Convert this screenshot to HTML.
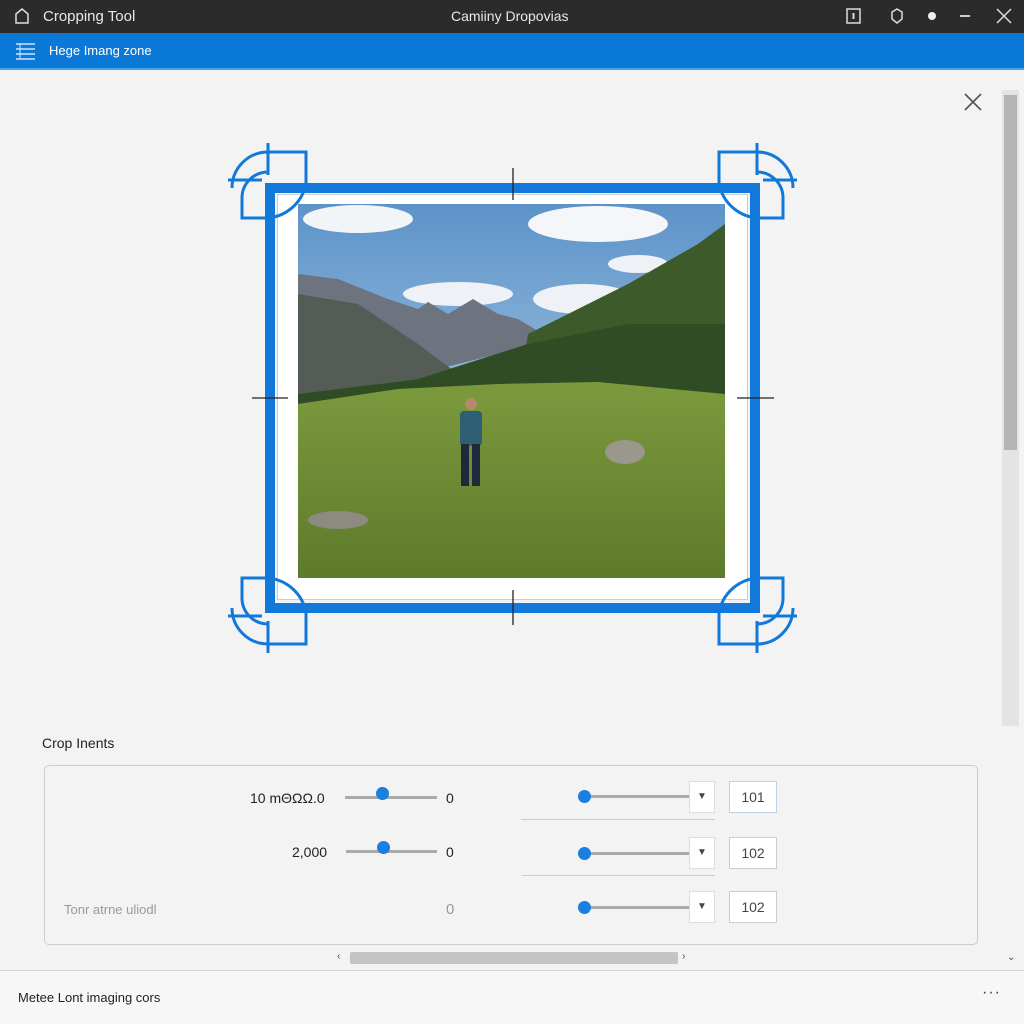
<!DOCTYPE html>
<html><head><meta charset="utf-8"><style>
*{margin:0;padding:0;box-sizing:border-box}
body{width:1024px;height:1024px;background:#f3f3f3;font-family:"Liberation Sans",sans-serif;position:relative;overflow:hidden;color:#222}
.abs{position:absolute}
.title{left:0;top:0;width:1024px;height:33px;background:#2b2b2b;color:#e8e8e8;font-size:15px}
.blue{left:0;top:33px;width:1024px;height:37px;background:#0b79d8;border-bottom:2px solid #4aa3ea;color:#fff;font-size:13px}
.thumb{width:13px;height:13px;border-radius:50%;background:#1a7fe0}
.track{height:3px;background:#aaa}
.dd{width:26px;height:32px;background:#fff;border:1px solid #ddd;font-size:10px;color:#444;text-align:center;line-height:30px}
.nb{width:48px;height:32px;background:#fff;border:1px solid #ccc;font-size:14px;color:#444;text-align:center;line-height:30px}
</style></head><body>
<div class="abs title">
 <svg class="abs" style="left:14px;top:7px" width="16" height="18"><path d="M2 7 L8 2 L14 7 V16 H2Z" fill="none" stroke="#ddd" stroke-width="1.5"/></svg>
 <div class="abs" style="left:43px;top:8px">Cropping Tool</div>
 <div class="abs" style="left:451px;top:8px;font-size:14px">Camiiny Dropovias</div>
 <svg class="abs" style="left:846px;top:8px" width="16" height="17"><rect x="1" y="1" width="13" height="14" fill="none" stroke="#ddd" stroke-width="1.5"/><line x1="7.5" y1="5" x2="7.5" y2="11" stroke="#ddd" stroke-width="2"/></svg>
 <svg class="abs" style="left:889px;top:7px" width="16" height="18"><path d="M8 2 L13 5 L13 12 L8 16 L3 12 L3 5Z" fill="none" stroke="#ddd" stroke-width="1.5"/></svg>
 <div class="abs" style="left:928px;top:12px;width:8px;height:8px;border-radius:50%;background:#eee"></div>
 <div class="abs" style="left:960px;top:15px;width:10px;height:2px;background:#ccc"></div>
 <svg class="abs" style="left:995px;top:7px" width="18" height="18"><path d="M2 2 L16 16 M16 2 L2 16" stroke="#ddd" stroke-width="1.5"/></svg>
</div>
<div class="abs blue">
 <svg class="abs" style="left:15px;top:9px" width="22" height="18"><path d="M1 2H20M1 7H20M1 12H20M1 17H20" stroke="#cfe6fb" stroke-width="1.5"/><path d="M5 2V17" stroke="#cfe6fb" stroke-width="1"/></svg>
 <div class="abs" style="left:49px;top:10px">Hege Imang zone</div>
</div>
<svg class="abs" style="left:963px;top:92px" width="20" height="20"><path d="M2 2L18 18M18 2L2 18" stroke="#555" stroke-width="1.6"/></svg>
<!-- scrollbar -->
<div class="abs" style="left:1002px;top:90px;width:17px;height:636px;background:#e4e4e4"></div>
<div class="abs" style="left:1004px;top:95px;width:13px;height:355px;background:#b4b4b4"></div>
<div class="abs" style="left:1007px;top:952px;font-size:10px;color:#444">⌄</div>
<!-- crop area -->
<div class="abs" style="left:265px;top:183px;width:495px;height:430px;border:10px solid #1279db"></div>
<div class="abs" style="left:277px;top:194px;width:471px;height:406px;background:#fff;border:1px solid #ccc"></div>
<svg class="abs" style="left:298px;top:204px" width="427" height="374" viewBox="0 0 427 374">
 <defs><linearGradient id="sky" x1="0" y1="0" x2="0" y2="1"><stop offset="0" stop-color="#5d93c9"/><stop offset="1" stop-color="#c4dbed"/></linearGradient>
 <linearGradient id="gr" x1="0" y1="0" x2="0" y2="1"><stop offset="0" stop-color="#7c9a3d"/><stop offset="1" stop-color="#5e7a2c"/></linearGradient></defs>
 <rect width="427" height="374" fill="url(#sky)"/>
 <ellipse cx="60" cy="15" rx="55" ry="14" fill="#f2f5f8"/><ellipse cx="300" cy="20" rx="70" ry="18" fill="#f4f6f9"/><ellipse cx="160" cy="90" rx="55" ry="12" fill="#eef2f6"/><ellipse cx="285" cy="95" rx="50" ry="15" fill="#eef2f6"/><ellipse cx="340" cy="60" rx="30" ry="9" fill="#eef2f6"/>
 <path d="M0 70 L40 75 L90 95 L120 105 L130 98 L150 110 L175 95 L200 110 L220 115 L245 130 L260 135 L0 200Z" fill="#6d7480"/>
 <path d="M0 90 L60 100 L120 140 L160 170 L0 190Z" fill="#555c55"/>
 <path d="M230 130 L330 80 L400 40 L427 20 L427 200 L220 190Z" fill="#3d5a2a"/>
 <path d="M0 190 L120 175 L230 140 L330 120 L427 120 L427 210 L0 210Z" fill="#2f4c24"/>
 <path d="M0 200 L100 185 L200 180 L300 178 L427 190 L427 374 L0 374Z" fill="url(#gr)"/>
 <ellipse cx="327" cy="248" rx="20" ry="12" fill="#9a978d"/><ellipse cx="40" cy="316" rx="30" ry="9" fill="#8d8a80"/>
 <rect x="162" y="207" width="22" height="35" rx="4" fill="#2e5f73"/><circle cx="173" cy="200" r="6" fill="#b58a6a"/><rect x="163" y="240" width="8" height="42" fill="#1e2a3c"/><rect x="174" y="240" width="8" height="42" fill="#1e2a3c"/>
</svg>
<svg class="abs" style="left:0;top:0" width="1024" height="1024" fill="none" stroke="#1279db">
 <g stroke="#222" stroke-width="1.3"><path d="M513 168V200M513 590V625M252 398H288M737 398H774"/></g>
 <g id="c" stroke-width="3">
  <path d="M268 152H306V183 M268 152V172 A26 26 0 0 0 242 198V218H265 M306 183 A42 42 0 0 1 265 218 M268 152 A36 36 0 0 0 232 188"/>
  <path d="M228 180H262M268 143V175"/>
 </g>
 <use href="#c" transform="translate(1025 0) scale(-1 1)"/>
 <use href="#c" transform="translate(0 796) scale(1 -1)"/>
 <use href="#c" transform="translate(1025 796) scale(-1 -1)"/>
</svg>
<!-- panel -->
<div class="abs" style="left:42px;top:735px;font-size:14px">Crop Inents</div>
<div class="abs" style="left:44px;top:765px;width:934px;height:180px;border:1px solid #ccc;border-radius:5px"></div>
<div class="abs" style="left:250px;top:790px;font-size:14px">10 mΘΩΩ.0</div>
<div class="abs track" style="left:345px;top:796px;width:92px"></div><div class="abs thumb" style="left:376px;top:787px"></div>
<div class="abs" style="left:446px;top:790px;font-size:14px">0</div>
<div class="abs" style="left:292px;top:844px;font-size:14px">2,000</div>
<div class="abs track" style="left:346px;top:850px;width:91px"></div><div class="abs thumb" style="left:377px;top:841px"></div>
<div class="abs" style="left:446px;top:844px;font-size:14px">0</div>
<div class="abs" style="left:64px;top:902px;font-size:13px;color:#999">Tonr atrne uliodl</div>
<div class="abs" style="left:446px;top:901px;font-size:15px;color:#999">0</div>
<div class="abs" style="left:521px;top:819px;width:194px;height:1px;background:#ccc"></div>
<div class="abs" style="left:522px;top:875px;width:193px;height:1px;background:#ccc"></div>
<div class="abs track" style="left:585px;top:795px;width:105px"></div><div class="abs thumb" style="left:578px;top:790px"></div>
<div class="abs dd" style="left:689px;top:781px">▼</div><div class="abs nb" style="left:729px;top:781px;border-color:#b8d3ea">101</div>
<div class="abs track" style="left:585px;top:852px;width:105px"></div><div class="abs thumb" style="left:578px;top:847px"></div>
<div class="abs dd" style="left:689px;top:837px">▼</div><div class="abs nb" style="left:729px;top:837px">102</div>
<div class="abs track" style="left:585px;top:906px;width:105px"></div><div class="abs thumb" style="left:578px;top:901px"></div>
<div class="abs dd" style="left:689px;top:891px">▼</div><div class="abs nb" style="left:729px;top:891px">102</div>
<!-- h scroll -->
<div class="abs" style="left:337px;top:951px;font-size:10px;color:#444">‹</div>
<div class="abs" style="left:350px;top:952px;width:328px;height:12px;background:#c4c4c4;border-radius:2px"></div>
<div class="abs" style="left:682px;top:951px;font-size:10px;color:#444">›</div>
<div class="abs" style="left:0;top:970px;width:1024px;height:1px;background:#d4d4d4"></div>
<div class="abs" style="left:0;top:971px;width:1024px;height:53px;background:#f7f7f7"></div>
<div class="abs" style="left:18px;top:990px;font-size:13px">Metee Lont imaging cors</div>
<div class="abs" style="left:982px;top:984px;font-size:16px;color:#444;letter-spacing:1px">···</div>
</body></html>
